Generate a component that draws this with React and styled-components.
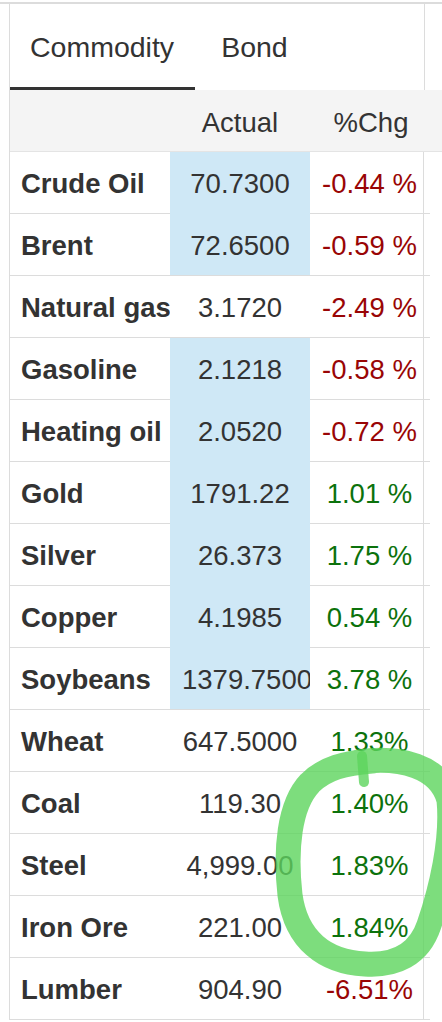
import React from 'react';
import styled, { createGlobalStyle } from 'styled-components';

const GlobalStyle = createGlobalStyle`
  html, body {
    margin: 0;
    padding: 0;
    background: #fff;
  }
  body {
    font-family: 'Liberation Sans', Arial, Helvetica, sans-serif;
    color: #333;
  }
`;

const rows = [
  { name: 'Crude Oil', actual: '70.7300', chg: '-0.44 %', hi: true },
  { name: 'Brent', actual: '72.6500', chg: '-0.59 %', hi: true },
  { name: 'Natural gas', actual: '3.1720', chg: '-2.49 %' },
  { name: 'Gasoline', actual: '2.1218', chg: '-0.58 %', hi: true },
  { name: 'Heating oil', actual: '2.0520', chg: '-0.72 %', hi: true },
  { name: 'Gold', actual: '1791.22', chg: '1.01 %', hi: true },
  { name: 'Silver', actual: '26.373', chg: '1.75 %', hi: true },
  { name: 'Copper', actual: '4.1985', chg: '0.54 %', hi: true },
  { name: 'Soybeans', actual: '1379.7500', chg: '3.78 %', hi: true },
  { name: 'Wheat', actual: '647.5000', chg: '1.33%' },
  { name: 'Coal', actual: '119.30', chg: '1.40%' },
  { name: 'Steel', actual: '4,999.00', chg: '1.83%' },
  { name: 'Iron Ore', actual: '221.00', chg: '1.84%' },
  { name: 'Lumber', actual: '904.90', chg: '-6.51%' },
];

const Page = styled.div`
  position: relative;
  width: 442px;
  height: 1022px;
  overflow: hidden;
  padding-top: 2px;
  box-sizing: border-box;
`;

const TopRule = styled.div`
  height: 2px;
  background: #dcdcdc;
`;

const Panel = styled.div`
  margin-left: 9px;
  border-left: 1px solid #dcdcdc;
`;

const TabBar = styled.div`
  display: flex;
  width: 414px;
  height: 86px;
  border-right: 1px solid #dcdcdc;
`;

const Tab = styled.div`
  display: flex;
  align-items: center;
  box-sizing: border-box;
  height: 86px;
  padding: 3px ${(p) => (p.$active ? '21px' : '20px')} 0 ${(p) => (p.$active ? '20px' : '26px')};
  font-size: 28.5px;
  color: #333;
  border-bottom: 3px solid ${(p) => (p.$active ? '#333' : 'transparent')};
`;

const Grid = styled.div`
  display: grid;
  grid-template-columns: 160px 140px 114px 6px;
  align-items: stretch;
`;

const HeadRow = styled(Grid)`
  width: 432px;
  grid-template-columns: 160px 140px 114px 18px;
  height: 61px;
  background: #f4f4f4;
  border-bottom: 1px solid #e4e4e4;
  font-size: 27.5px;
`;

const HeadCell = styled.div`
  line-height: 61px;
  padding-top: 2px;
  text-align: center;
  padding-left: ${(p) => (p.$pct ? '8px' : '0')};
`;

const Row = styled(Grid)`
  width: 420px;
  height: 62px;
  font-size: 27.5px;
`;

const Cell = styled.div`
  box-sizing: border-box;
  line-height: 58px;
  padding-top: 3px;
  white-space: nowrap;
  overflow: hidden;
  border-bottom: 1px solid #dcdcdc;
`;

const NameCell = styled(Cell)`
  padding-left: 11px;
  font-weight: bold;
`;

const ValueCell = styled(Cell)`
  padding-left: 12px;
  padding-right: 12px;
  text-align: center;
  text-overflow: clip;
  background: ${(p) => (p.$hi ? '#cfe8f6' : '#fff')};
  border-bottom-color: ${(p) => (p.$join ? '#cfe8f6' : '#dcdcdc')};
`;

const ChgCell = styled(Cell)`
  padding-left: 6px;
  text-align: center;
  overflow: visible;
  color: ${(p) => (p.$up ? '#0c720c' : '#990505')};
  border-right: 1px solid #dcdcdc;
`;

const Tail = styled.div`
  border-bottom: 1px solid #dcdcdc;
`;

const Scribble = styled.svg`
  position: absolute;
  left: 0;
  top: 0;
  pointer-events: none;
`;

export default function App() {
  return (
    <>
      <GlobalStyle />
      <Page>
        <TopRule />
        <Panel>
          <TabBar>
            <Tab $active>Commodity</Tab>
            <Tab>Bond</Tab>
          </TabBar>
          <HeadRow>
            <HeadCell />
            <HeadCell>Actual</HeadCell>
            <HeadCell $pct>%Chg</HeadCell>
            <HeadCell />
          </HeadRow>
          {rows.map((r, i) => {
            const next = rows[i + 1];
            return (
              <Row key={r.name}>
                <NameCell>{r.name}</NameCell>
                <ValueCell $hi={r.hi} $join={r.hi && next && next.hi}>
                  {r.actual}
                </ValueCell>
                <ChgCell $up={!r.chg.startsWith('-')}>{r.chg}</ChgCell>
                <Tail />
              </Row>
            );
          })}
        </Panel>
        <Scribble width="442" height="1022" viewBox="0 0 442 1022">
          <g
            fill="none"
            stroke="rgb(92, 212, 92)"
            strokeOpacity="0.8"
            strokeLinecap="round"
            strokeLinejoin="round"
          >
            <path
              strokeWidth="25"
              d="M 358 762 C 400 756, 440 766, 449 800 C 453 840, 441 890, 429 925 C 419 955, 395 966, 365 964 C 325 962, 296 940, 290 895 C 285 850, 289 805, 310 783 C 325 768, 345 763, 372 761"
            />
            <path strokeWidth="10" d="M 362 756 L 364 782" />
          </g>
        </Scribble>
      </Page>
    </>
  );
}
